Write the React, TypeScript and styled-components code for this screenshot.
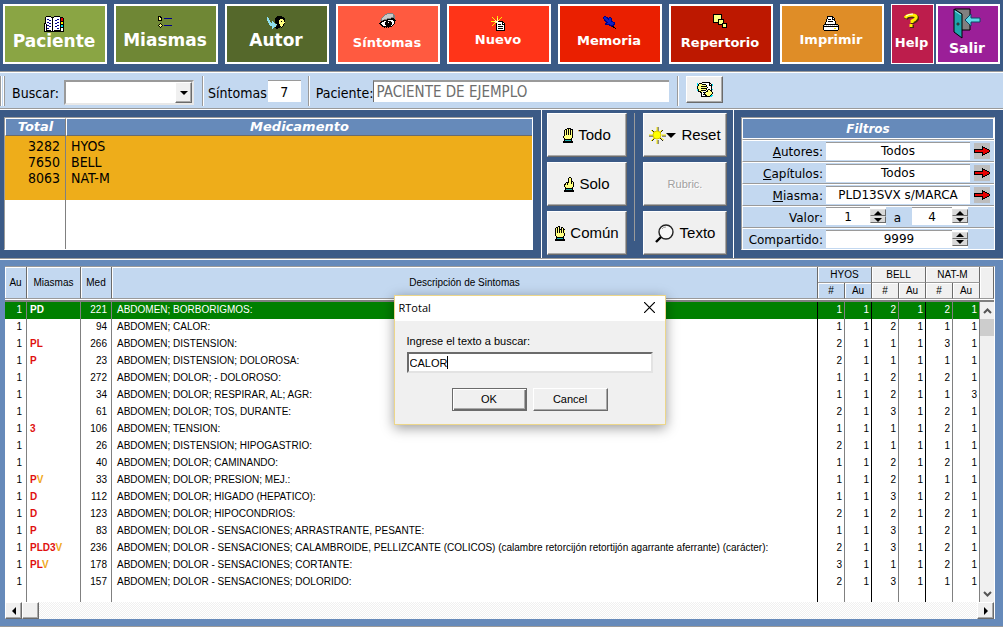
import React from "react";
import styled, { createGlobalStyle, css } from "styled-components";

const color = {
  navy: "#3b5a86",
  steel: "#668aba",
  sky: "#c3d8f0",
  face: "#f0f0f0",
  amber: "#eead1a",
  line: "#9a9a9a",
  dark: "#6b6b6b",
};

const wide = `"DejaVu Sans", Verdana, sans-serif`;
const narrow = `"DejaVu Sans Condensed", "DejaVu Sans", Tahoma, sans-serif`;
const plain = `"Liberation Sans", Arial, sans-serif`;

const GlobalStyle = createGlobalStyle`
  *, *::before, *::after { box-sizing: border-box; }
  body { margin: 0; background: ${color.steel}; color: #000; font-family: ${plain}; }
  button, input, select { font: inherit; color: inherit; margin: 0; padding: 0; border-radius: 0; }
`;

/* ---------- pixel icons ---------- */

const inks: Record<string, string> = {
  k: "#000",
  w: "#fff",
  y: "#ffff80",
  Y: "#ffee00",
  r: "#e60000",
  c: "#8fe0ee",
  C: "#00e0f0",
  n: "#00008b",
  b: "#1020c0",
  g: "#808080",
  s: "#c8c8c8",
  t: "#008080",
  T: "#20b0b0",
};

const Svg = styled.svg`
  display: block;
  flex: none;
`;

function Pixels({ map }: { map: string[] }) {
  const w = Math.max(...map.map((r) => r.length));
  const h = map.length;
  return (
    <Svg width={w} height={h} viewBox={`0 0 ${w} ${h}`} shapeRendering="crispEdges" aria-hidden="true">
      {map.flatMap((row, y) =>
        [...row].map((ch, x) =>
          inks[ch] ? <rect key={`${x}-${y}`} x={x} y={y} width="1" height="1" fill={inks[ch]} /> : null
        )
      )}
    </Svg>
  );
}

const book = [
  "..kkkkk...kkkkkk....",
  ".kwwwwwkkkwwwwwwkkk.",
  ".kwwwwwwkwwwwwwwkrrk",
  ".kwnnwwwkwwwwnnwkrrk",
  ".kwwwnnwkwwnnwwwkrrk",
  ".kwwwwwwkwwwwwwwkkkk",
  ".kwnnwwwkwwwwnnwkYYk",
  "kkwwwnnwkwwnnwwwkYYk",
  "kwkwwwwwkwwwwwwwkkkk",
  "kwknnwwwkwwwwnnwkCCk",
  "kwkwwnnwkwwnnwwwkCCk",
  "kwkwwwwwkwwwwwwwkkkk",
  "kwknnwwwkwwwwnnwkwwk",
  "kwkwwwwwkwwwwwwwkwwk",
  "kwkkkkkwkwkkkkkkkwwk",
  "kkkkkkkkkkkkkkkkkkkk",
];

const list = [
  "kkk...........",
  "kykk..........",
  "kyyk..nnnnnnnn",
  "kyyk..........",
  "kkkk..........",
  "..............",
  "..............",
  "..k...........",
  ".kyk..........",
  "kyyyk.nnnnnnnn",
  ".kyk..........",
  "..k...........",
];

const author = [
  "..........kkkkk...",
  "c........kkkkkkkk.",
  "cc......kkkkkkkkkk",
  "cc......kkkkkyyykk",
  "ccc.....kkkkyyyyyk",
  ".cc..c..kkkkyykyyk",
  ".ccc.cc.kkkkyyyyyy",
  "..cccccc.kkkyyyyyk",
  "..cccccccckkkyyyk.",
  "...cccccc.kkkyyyk.",
  ".....cccckkkkkyk..",
  ".....cc.kkkkk.k...",
  ".....c...kk.......",
];

const eye = [
  "........gggggg...",
  "......ggssssssg..",
  ".....gssssssssgg.",
  "....gsssssssssgg.",
  "...gssssssssgggg.",
  "..gsssssggggkkkg.",
  "..gssgggkkkkkkkk.",
  ".gggkkkkkwwwwwkkk",
  "..kkkwwkkkkkwwwk.",
  ".kkwwwkkkwkkkwwk.",
  "kkwwwwkkkkkkkwwk.",
  ".kkwwwkkkkkkkwk..",
  "..kkwwwkkkkkwk...",
  "...kkkkkkkkkk....",
  ".....k.k.k.......",
];

const fresh = [
  "......Y.......",
  ".Y....Y...Y...",
  "..Y...y..Y....",
  "...Y..y.Y.....",
  "....y.yy......",
  "YYYyywwkkkkk..",
  "....yywwwwwkk.",
  "...Y.kwwwwwkwk",
  "..Y..kwkkkwkkk",
  ".Y...kwwwwwwwk",
  ".....kwkkkkkwk",
  ".....kwwwwwwwk",
  ".....kwkkkkkwk",
  ".....kwwwwwwwk",
  ".....kkkkkkkkk",
];

const pin = [
  ".nn..........",
  "nbbnn.nn.....",
  "nbbbnnbbn....",
  ".nbbbnbbn....",
  ".nnbbbbbn....",
  "..nnbbbbnn...",
  "...nnbbbbbnn.",
  "..nnbbbbbbbn.",
  "..nnnnnbbbnn.",
  "......nnnnn..",
  "........nkk..",
  "..........kk.",
  "............k",
];

const squares = [
  "kkkkkkkkk.....",
  "kyyyyyyyk.....",
  "kyyyyyyyk.....",
  "kyyyyyyyk.....",
  "kyyyyyyyk.....",
  "kyyyykkkkkk...",
  "kyyyykyyyyk...",
  "kyyyykyyyyk...",
  "kkkkkkyyyyk...",
  ".....kyyykkkkk",
  ".....kkkkkyyyk",
  ".........kyyyk",
  ".........kyyyk",
  ".........kkkkk",
];

const printer = [
  "....kkkkkk......",
  "....kwwwwkk.....",
  "....kwwwwkwk....",
  "...kwkkkwkkk....",
  "...kwwwwwwwk....",
  "...kwkkkkkwwk...",
  "..kwwwwwwwwwk...",
  "..kwwwwwwwwwk...",
  ".kkkkkkkkkkkkkk.",
  "kswswswswswswssk",
  "kkkkkkkkkkkkkkkk",
  "kwwwwwwwwwwwwwwk",
  "kwwwwwwwwwwYYwwk",
  "kwwwwwwwwwwwwwwk",
  ".kkkkkkkkkkkkkk.",
];

const handOpen = [
  "....kkkk..",
  "..kkykykkk",
  ".kykykykyk",
  ".kykykykyk",
  ".kykykykyk",
  ".kykykykyk",
  ".kykykykyk",
  ".kyyyyyyyk",
  "kyyyyyyyyk",
  "kyyyyyyyyk",
  ".kyyyyyyk.",
  ".kkkkkkkk.",
  ".kTTTTTTk.",
  "kkkkkkkkkk",
  "kkkkkkkkkk",
];

const handOne = [
  ".....kk...",
  "....kyyk..",
  "....kyyk..",
  "....kyyk..",
  "....kyykk.",
  "..kkkyykyk",
  ".kykyyykyk",
  "kkykyyyyyk",
  "kyyyyyyyyk",
  "kyyyyyyyyk",
  ".kyyyyyyk.",
  ".kkkkkkkk.",
  ".kTTTTTTk.",
  "kkkkkkkkkk",
  "kkkkkkkkkk",
];

const handSome = [
  "...kk.....",
  ".kkyk.kk..",
  "kykyk.kyk.",
  "kykykkkykk",
  "kykykykyky",
  "kykykykyky",
  "kykykykyky",
  "kyyyyyyyyk",
  "kyyyyyyyyk",
  "kyyyyyyyyk",
  ".kyyyyyyk.",
  ".kkkkkkkk.",
  ".kTTTTTTk.",
  "kkkkkkkkkk",
  "kkkkkkkkkk",
];

const handSheet = [
  ".....kkkkkkkk...",
  "C.kkkwwwwwwwkk..",
  "CkyyykkkkwwwkwkC",
  "CkyyyyyyykwwkkkC",
  "kyyykkkkkkwwwwk.",
  "kyyyyyyyyykwwwk.",
  "kyyykkkkkkwwwwk.",
  "CkyyyyyyykwkkwkC",
  "Ckyykkkkkwkyykk.",
  ".kkkyywwwkkyyyk.",
  "...kkwkkkyyyyyyk",
  "....kwwkyyyyyyyk",
  "....kwkkkyyyyyk.",
  "....kwwwkkyyykCC",
  "....kkkkkkkkkCC.",
];

const redArrow = [
  "........k.......",
  "........kkk.....",
  "........krrkk...",
  "kkkkkkkkkrrrrkk.",
  "krrrrrrrrrrrrrrk",
  "krrrrrrrrrrrrrrk",
  "kkkkkkkkkrrrrkk.",
  "........krrkk...",
  "........kkk.....",
  "........k.......",
];

function HelpIcon() {
  return (
    <Svg width="15" height="15" viewBox="0 0 15 15" aria-hidden="true">
      <path d="M2 6 Q3 3 8 3 Q14 3 13 6 Q12 8 9 9 V11 M8 12 V15" fill="none" stroke="#4a2a10" strokeWidth="4" />
      <path d="M1 5 Q3 2 8 2 Q13 2 12 5 Q11 7 8 8 V10 M7 11 V14" fill="none" stroke="#ffee00" strokeWidth="3" />
      <path d="M2 3 Q5 1 9 1" fill="none" stroke="#fff" strokeWidth="1" />
    </Svg>
  );
}

function DoorIcon() {
  return (
    <Svg width="28" height="31" viewBox="0 0 28 31" aria-hidden="true">
      <path d="M2 1 H17 V22 H2 Z" fill="#808080" stroke="#000" />
      <path d="M1 1 L9 6 V30 L1 24 Z" fill="#1fa3ac" stroke="#000" />
      <path d="M2 3 L8 7" stroke="#8fe0ee" />
      <path d="M12 12 L18 6 V10 H27 V14 H18 V18 Z" fill="#5fd8e6" stroke="#0b4a66" />
      <circle cx="5" cy="16" r="1" fill="#fff" stroke="#000" />
    </Svg>
  );
}

function SunIcon() {
  return (
    <Svg width="17" height="17" viewBox="0 0 17 17" aria-hidden="true">
      <path
        d="M9 0 V4 M9 13 V17 M0 9 H4 M13 9 H17 M3 3 L6 6 M14 3 L11 6 M3 14 L6 11 M14 14 L11 11"
        stroke="#222"
        strokeWidth="1"
      />
      <path
        d="M8 0 V4 M8 13 V17 M0 8 H4 M13 8 H17 M2 3 L5 6 M13 3 L11 5 M2 14 L5 11 M15 13 L12 11"
        stroke="#ffee00"
        strokeWidth="1"
      />
      <circle cx="8" cy="8" r="4" fill="#ffff00" stroke="#d8c800" strokeWidth="1" />
    </Svg>
  );
}

function LensIcon() {
  return (
    <Svg width="20" height="19" viewBox="0 0 20 19" aria-hidden="true">
      <circle cx="11" cy="8" r="7" fill="#f8f8f8" stroke="#222" strokeWidth="1.4" />
      <path d="M6 13 L1 18" stroke="#000" strokeWidth="2.4" />
      <path d="M7 5 Q8 3 11 3" stroke="#999" fill="none" />
    </Svg>
  );
}

function Triangle({ dir, size = 4 }: { dir: "up" | "down" | "left" | "right"; size?: number }) {
  const s = size;
  const shapes = {
    down: `0,0 ${2 * s},0 ${s},${s}`,
    up: `0,${s} ${2 * s},${s} ${s},0`,
    left: `${s},0 ${s},${2 * s} 0,${s}`,
    right: `0,0 0,${2 * s} ${s},${s}`,
  };
  const flat = dir === "up" || dir === "down";
  return (
    <Svg width={flat ? 2 * s : s} height={flat ? s : 2 * s} aria-hidden="true">
      <polygon points={shapes[dir]} fill="#000" />
    </Svg>
  );
}

function Chevron({ up }: { up?: boolean }) {
  return (
    <Svg width="9" height="6" viewBox="0 0 9 6" aria-hidden="true">
      <path d={up ? "M1 5 L4.5 1.5 L8 5" : "M1 1 L4.5 4.5 L8 1"} fill="none" stroke="#555" strokeWidth="2" />
    </Svg>
  );
}

/* ---------- shared pieces ---------- */

const raised = css`
  background: ${color.face};
  border: 1px solid;
  border-color: #fff ${color.dark} ${color.dark} #fff;
  box-shadow: inset -1px -1px 0 #a9a9a9;
`;

const groove = css`
  border-top: 1px solid ${color.line};
  box-shadow: inset 0 1px 0 #fff;
`;

const Page = styled.div`
  position: relative;
  min-height: 100vh;
  display: flex;
  flex-direction: column;
`;

/* ---------- main toolbar ---------- */

const Toolbar = styled.nav`
  display: grid;
  grid-template-columns: repeat(8, 104fr) 109fr;
  gap: 7px;
  padding: 4px 3px 7px;
  background: ${color.navy};
`;

const Pair = styled.div`
  display: grid;
  grid-template-columns: 43fr 64fr;
  gap: 2px;
`;

const Tile = styled.button<{ $bg: string; $size: number; $gap: number; $thin?: boolean }>`
  display: flex;
  flex-direction: column;
  align-items: center;
  justify-content: center;
  gap: ${(p) => p.$gap}px;
  height: 60px;
  padding: 0 2px 3px 0;
  border: ${(p) => (p.$thin ? 1 : 2)}px solid #fff;
  background: ${(p) => p.$bg};
  color: #fff;
  font: bold ${(p) => p.$size}px/18px ${wide};
`;

const tiles = [
  { label: "Paciente", bg: "#8aa544", size: 17, gap: 0, map: book },
  { label: "Miasmas", bg: "#6f8735", size: 17, gap: 3, map: list },
  { label: "Autor", bg: "#55682b", size: 17, gap: 2, map: author },
  { label: "Síntomas", bg: "#ff5a40", size: 13, gap: 6, map: eye },
  { label: "Nuevo", bg: "#ff3418", size: 13, gap: 0, map: fresh },
  { label: "Memoria", bg: "#ea1f00", size: 13, gap: 3, map: pin },
  { label: "Repertorio", bg: "#bd1800", size: 13, gap: 6, map: squares },
  { label: "Imprimir", bg: "#df8d27", size: 13, gap: 0, map: printer },
];

/* ---------- search bar ---------- */

const SearchBar = styled.form`
  ${groove}
  display: flex;
  align-items: stretch;
  height: 37px;
  padding: 4px 0 2px;
  background: ${color.sky};
  font: 14px/18px ${narrow};
`;

const Grip = styled.i`
  width: 5px;
  border: 1px solid ${color.line};
  border-width: 0 1px;
  box-shadow: inset -1px 0 0 #fff, inset 1px 0 0 #fff;
`;

const Band = styled.div<{ $pad: string }>`
  display: flex;
  align-items: flex-start;
  padding: ${(p) => p.$pad};

  & + & {
    border-left: 1px solid ${color.line};
    box-shadow: inset 1px 0 0 #fff;
  }

  label {
    padding-top: 4px;
  }
`;

const Combo = styled.div`
  position: relative;
  margin-left: 5px;
  width: 130px;
  height: 25px;
  border: 2px solid;
  border-color: ${color.line} #e8e8e8 #e8e8e8 ${color.line};

  select {
    width: 100%;
    height: 100%;
    appearance: none;
    border: 0;
    background: #fff;
  }

  span {
    ${raised}
    position: absolute;
    inset: 0 0 0 auto;
    width: 17px;
    display: grid;
    place-items: center;
    pointer-events: none;
  }
`;

const CountInput = styled.input`
  width: 33px;
  height: 22px;
  margin-left: 1px;
  border: 0;
  border-top: 1px solid ${color.line};
  background: #fff;
  text-align: center;
`;

const PatientInput = styled.input`
  width: 296px;
  height: 22px;
  border: 0;
  border-top: 2px solid ${color.line};
  border-left: 1px solid ${color.dark};
  padding-left: 2px;
  background: #fff;
  color: #6d6d6d;
  font-size: 15px;
`;

const SheetButton = styled.button`
  ${raised}
  display: grid;
  place-items: center;
  width: 37px;
  height: 27px;
`;

/* ---------- middle panel ---------- */

const Middle = styled.section`
  ${groove}
  display: flex;
  height: 150px;
  padding-top: 1px;
  background: ${color.navy};
`;

const MedPane = styled.div`
  flex: 1;
  min-width: 0;
  padding: 7px 8px 8px 4px;
`;

const MedBox = styled.div`
  height: 133px;
  border: 1px solid;
  border-color: ${color.line} #fff #fff ${color.line};
  background: linear-gradient(${color.amber} 82px, #fff 82px);
`;

const MedTable = styled.table`
  width: 100%;
  height: 100%;
  border-collapse: separate;
  border-spacing: 0;
  table-layout: fixed;
  font: 14px/16px ${narrow};

  th {
    height: 18px;
    padding: 0;
    background: ${color.steel};
    border-top: 1px solid #fff;
    border-left: 1px solid #fff;
    border-bottom: 1px solid ${color.dark};
    color: #fff;
    font: italic bold 13px/16px ${wide};
  }

  td {
    height: 16px;
    padding: 0 5px;
  }

  td:first-child,
  th:first-child {
    width: 61px;
    border-right: 1px solid #808080;
    text-align: right;
  }

  th:first-child {
    text-align: center;
  }

  tbody tr:first-child td {
    height: 18px;
    padding-top: 2px;
  }

  tbody tr:last-child td {
    height: auto;
  }
`;

const Actions = styled.div`
  display: flex;
  width: 193px;
  padding: 3px 4px 0 5px;
  border: 1px solid #fff;
  border-width: 0 1px;
`;

const ActionColumn = styled.div<{ $w: number }>`
  display: flex;
  flex-direction: column;
  gap: 5px;
  width: ${(p) => p.$w}px;
`;

const Divider = styled.i`
  width: 1px;
  height: 128px;
  margin: 0 8px 0 7px;
  background: ${color.line};
`;

const Action = styled.button`
  ${raised}
  display: flex;
  align-items: center;
  justify-content: center;
  gap: 5px;
  height: 44px;
  font: 15px/18px ${plain};

  &:disabled {
    color: #a0a0a0;
    font-size: 11px;
    text-shadow: 1px 1px 0 #fff;
  }
`;

const Sunburst = styled.span`
  display: flex;
  align-items: center;
`;

const FilterPane = styled.form`
  width: 269px;
  padding: 7px 8px 8px 7px;
`;

const FilterBox = styled.fieldset`
  margin: 0;
  padding: 0;
  min-width: 0;
  border: 1px solid;
  border-color: ${color.line} #fff #fff ${color.line};
  background: ${color.sky};
  font: 12px/16px ${wide};
`;

const FilterTitle = styled.div`
  height: 21px;
  border: 1px solid #fff;
  background: ${color.steel};
  color: #fff;
  text-align: center;
  font-style: italic;
  font-weight: bold;
  line-height: 20px;
`;

const FilterRow = styled.div`
  display: grid;
  grid-template-columns: 83px 1fr 24px;
  align-items: center;
  height: 22px;
  border-top: 1px solid ${color.line};
  border-left: 1px solid #fff;
  box-shadow: inset 0 1px 0 #fff;

  label {
    padding: 3px 3px 0 0;
    text-align: right;
  }
`;

const FilterInput = styled.input<{ $lead?: number }>`
  width: 100%;
  min-width: 0;
  height: 18px;
  padding-left: ${(p) => p.$lead ?? 0}px;
  border: 0;
  border-top: 1px solid ${color.line};
  background: #fff;
  text-align: center;
`;

const ArrowButton = styled.button`
  justify-self: center;
  display: grid;
  place-items: center;
  width: 16px;
  height: 16px;
  border: 0;
  background: #bdbdbd;
`;

const SpinField = styled.div<{ $w?: number }>`
  display: flex;
  align-items: center;
  width: ${(p) => (p.$w ? `${p.$w}px` : "auto")};
  height: 18px;
  margin-right: ${(p) => (p.$w ? 0 : 2)}px;
  background: #fff;
`;

const Spinner = styled.span`
  display: flex;
  flex: none;
  flex-direction: column;
  width: 16px;

  button {
    display: grid;
    place-items: center;
    height: 7px;
    border: 1px solid;
    border-color: #e0e0e0 ${color.dark} ${color.dark} #e0e0e0;
    background: #d8d8d8;
  }
`;

const Range = styled.div`
  display: flex;
  justify-content: space-between;
  margin-right: 2px;
`;

function Spin({ name }: { name: string }) {
  return (
    <Spinner>
      <button type="button" aria-label={`${name} +`}>
        <Triangle dir="up" size={4} />
      </button>
      <button type="button" aria-label={`${name} -`}>
        <Triangle dir="down" size={4} />
      </button>
    </Spinner>
  );
}

/* ---------- symptom grid ---------- */

const GridPane = styled.main`
  ${groove}
  flex: 1;
  padding: 7px 8px 7px 5px;
  background: ${color.steel};
  border-bottom: 1px solid ${color.line};
`;

const GridBox = styled.div`
  border: 1px solid;
  border-width: 1px 1px 0 0;
  border-color: ${color.line} #fff;
  background: #fff;
`;

const SymptomTable = styled.table`
  width: 100%;
  border-collapse: separate;
  border-spacing: 0;
  table-layout: fixed;
  font: 10px/15px ${plain};

  th {
    height: 16px;
    padding: 0;
    overflow: hidden;
    border-right: 1px solid ${color.dark};
    border-bottom: 1px solid ${color.line};
    box-shadow: inset 1px 1px 0 #fff;
    background: ${color.sky};
    font-weight: normal;
    white-space: nowrap;
  }

  th.off {
    background: ${color.face};
  }

  thead tr:last-child th {
    height: 15px;
  }
`;

const Rule = styled.td`
  height: 3px;
  padding: 0;
  border-top: 1px solid #fff;
  border-bottom: 2px solid #808080;
`;

const Cell = styled.td<{ $align?: "right"; $strong?: boolean; $pad?: number }>`
  height: 17px;
  padding: 0 ${(p) => p.$pad ?? 3}px 2px;
  border-right: 1px solid ${(p) => (p.$strong ? "#000" : "#808080")};
  text-align: ${(p) => p.$align ?? "left"};
  white-space: nowrap;
  overflow: hidden;
`;

const Row = styled.tr<{ $selected?: boolean }>`
  ${(p) =>
    p.$selected &&
    css`
      ${Cell} {
        background: #008000;
        color: #fff;
      }
    `}
`;

const Mark = styled.b<{ $tone: "red" | "gold" | "white" }>`
  color: ${(p) => ({ red: "#e01010", gold: "#f0a820", white: "#fff" })[p.$tone]};
`;

const ScrollCell = styled.td`
  padding: 0;
  height: 300px;
  vertical-align: top;
  background: ${color.face};
`;

const VScroll = styled.div`
  display: flex;
  flex-direction: column;
  height: 300px;

  button {
    display: grid;
    place-items: center;
    height: 17px;
    border: 0;
    background: ${color.face};
  }

  i {
    height: 17px;
    background: #cdcdcd;
  }

  button:last-child {
    margin-top: auto;
  }
`;

const HScroll = styled.div`
  display: flex;
  height: 17px;
  background: repeating-conic-gradient(#ffffff 0 25%, #f0f0f0 0 50%) 0 0 / 2px 2px;

  button,
  i {
    ${raised}
    display: grid;
    place-items: center;
    width: 17px;
  }

  button:last-child {
    margin-left: auto;
  }
`;

type Sym = [string, number, string, number[]];

const symptoms: Sym[] = [
  ["PD", 221, "ABDOMEN; BORBORIGMOS:", [1, 1, 2, 1, 2, 1]],
  ["", 94, "ABDOMEN; CALOR:", [1, 1, 2, 1, 1, 1]],
  ["PL", 266, "ABDOMEN; DISTENSION:", [2, 1, 1, 1, 3, 1]],
  ["P", 23, "ABDOMEN; DISTENSION; DOLOROSA:", [2, 1, 1, 1, 1, 1]],
  ["", 272, "ABDOMEN; DOLOR; - DOLOROSO:", [1, 1, 2, 1, 2, 1]],
  ["", 34, "ABDOMEN; DOLOR; RESPIRAR, AL; AGR:", [1, 1, 2, 1, 1, 3]],
  ["", 61, "ABDOMEN; DOLOR; TOS, DURANTE:", [2, 1, 3, 1, 2, 1]],
  ["3", 106, "ABDOMEN; TENSION:", [1, 1, 1, 1, 2, 1]],
  ["", 26, "ABDOMEN; DISTENSION; HIPOGASTRIO:", [2, 1, 1, 1, 1, 1]],
  ["", 40, "ABDOMEN; DOLOR; CAMINANDO:", [1, 1, 2, 1, 2, 1]],
  ["PV", 33, "ABDOMEN; DOLOR; PRESION; MEJ.:", [1, 1, 2, 1, 1, 1]],
  ["D", 112, "ABDOMEN; DOLOR; HIGADO (HEPATICO):", [1, 1, 3, 1, 2, 1]],
  ["D", 123, "ABDOMEN; DOLOR; HIPOCONDRIOS:", [2, 1, 2, 1, 2, 1]],
  ["P", 83, "ABDOMEN; DOLOR - SENSACIONES; ARRASTRANTE, PESANTE:", [1, 1, 3, 1, 2, 1]],
  [
    "PLD3V",
    236,
    "ABDOMEN; DOLOR - SENSACIONES; CALAMBROIDE, PELLIZCANTE (COLICOS) (calambre retorcijón retortijón agarrante aferrante) (carácter):",
    [2, 1, 3, 1, 2, 1],
  ],
  ["PLV", 178, "ABDOMEN; DOLOR - SENSACIONES; CORTANTE:", [3, 1, 1, 1, 2, 1]],
  ["", 157, "ABDOMEN; DOLOR - SENSACIONES; DOLORIDO:", [2, 1, 3, 1, 1, 1]],
];

function SymptomRow({ sym, first }: { sym: Sym; first: boolean }) {
  const [marks, med, text, nums] = sym;
  return (
    <Row $selected={first}>
      <Cell $align="right" $pad={4}>1</Cell>
      <Cell>
        {[...marks].map((m, i) => (
          <Mark key={i} $tone={first ? "white" : m === "V" ? "gold" : "red"}>{m}</Mark>
        ))}
      </Cell>
      <Cell $align="right" $pad={4}>{med}</Cell>
      <Cell $strong $pad={5}>{text}</Cell>
      {nums.map((n, i) => (
        <Cell key={i} $align="right" $strong={i === 1 || i === 3} $pad={2}>{n}</Cell>
      ))}
      {first && (
        <ScrollCell rowSpan={symptoms.length + 1}>
          <VScroll>
            <button type="button" aria-label="Subir"><Chevron up /></button>
            <i />
            <button type="button" aria-label="Bajar"><Chevron /></button>
          </VScroll>
        </ScrollCell>
      )}
    </Row>
  );
}

const FillCell = styled(Cell)`
  height: 11px;
  padding: 0;
`;

/* ---------- prompt ---------- */

const Dialog = styled.form`
  position: absolute;
  top: 295px;
  left: calc(50% - 108px);
  width: 272px;
  height: 130px;
  border: 1px solid #ecd68a;
  background: ${color.face};
  box-shadow: 0 3px 12px rgba(0, 0, 0, 0.4);
  font: 11px/14px ${plain};
`;

const DialogTitle = styled.header`
  display: flex;
  align-items: center;
  justify-content: space-between;
  height: 25px;
  padding: 0 8px 2px 4px;
  background: #fff;
  font: 11px/16px "Open Sans", "Noto Sans", sans-serif;

  button {
    display: grid;
    place-items: center;
    width: 15px;
    height: 15px;
    border: 0;
    background: none;
  }
`;

const DialogBody = styled.div`
  padding: 13px 12px 0;

  label {
    display: block;
  }
`;

const TextField = styled.div`
  display: flex;
  align-items: center;
  height: 21px;
  margin: 4px 0 15px;
  padding: 0 1px;
  border: 2px solid;
  border-color: ${color.dark} #e3e3e3 #e3e3e3 ${color.dark};
  background: #fff;

  input {
    field-sizing: content;
    border: 0;
    outline: 0;
    background: none;
  }

  i {
    width: 1px;
    height: 13px;
    background: #000;
  }
`;

const DialogButtons = styled.div`
  display: flex;
  justify-content: center;
  gap: 6px;
`;

const DialogButton = styled.button<{ $main?: boolean }>`
  ${raised}
  width: 75px;
  height: 23px;
  padding-bottom: 2px;
  ${(p) =>
    p.$main &&
    css`
      border-color: ${color.dark};
      box-shadow: inset 1px 1px 0 #fff, inset -1px -1px 0 ${color.dark}, inset -2px -2px 0 #a9a9a9;
    `}
`;

export default function App() {
  return (
    <Page>
      <GlobalStyle />
      <Toolbar>
        {tiles.map((t) => (
          <Tile key={t.label} type="button" $bg={t.bg} $size={t.size} $gap={t.gap}>
            <Pixels map={t.map} />
            {t.label}
          </Tile>
        ))}
        <Pair>
          <Tile type="button" $bg="#bd1d4c" $size={13} $gap={6} $thin>
            <HelpIcon />
            Help
          </Tile>
          <Tile type="button" $bg="#9b1f98" $size={14} $gap={0}>
            <DoorIcon />
            Salir
          </Tile>
        </Pair>
      </Toolbar>

      <SearchBar>
        <Grip />
        <Band $pad="4px 8px 0 7px">
          <label htmlFor="buscar">Buscar:</label>
          <Combo>
            <select id="buscar" defaultValue="">
              <option value=""></option>
            </select>
            <span><Triangle dir="down" /></span>
          </Combo>
        </Band>
        <Band $pad="4px 7px 0 5px">
          <label htmlFor="sintomas">Síntomas</label>
          <CountInput id="sintomas" defaultValue="7" />
        </Band>
        <Band $pad="4px 8px 0 7px">
          <label htmlFor="paciente">Paciente:</label>
          <PatientInput id="paciente" defaultValue="PACIENTE DE EJEMPLO" />
        </Band>
        <Band $pad="0 0 0 8px">
          <SheetButton type="button" aria-label="Ficha">
            <Pixels map={handSheet} />
          </SheetButton>
        </Band>
      </SearchBar>

      <Middle>
        <MedPane>
          <MedBox>
            <MedTable>
              <thead>
                <tr>
                  <th scope="col">Total</th>
                  <th scope="col">Medicamento</th>
                </tr>
              </thead>
              <tbody>
                <tr><td>3282</td><td>HYOS</td></tr>
                <tr><td>7650</td><td>BELL</td></tr>
                <tr><td>8063</td><td>NAT-M</td></tr>
                <tr><td /><td /></tr>
              </tbody>
            </MedTable>
          </MedBox>
        </MedPane>

        <Actions>
          <ActionColumn $w={80}>
            <Action type="button"><Pixels map={handOpen} />Todo</Action>
            <Action type="button"><Pixels map={handOne} />Solo</Action>
            <Action type="button"><Pixels map={handSome} />Común</Action>
          </ActionColumn>
          <Divider />
          <ActionColumn $w={84}>
            <Action type="button">
              <Sunburst><SunIcon /><Triangle dir="down" size={5} /></Sunburst>
              Reset
            </Action>
            <Action type="button" disabled>Rubric.</Action>
            <Action type="button"><LensIcon />Texto</Action>
          </ActionColumn>
        </Actions>

        <FilterPane>
          <FilterBox>
            <FilterTitle>Filtros</FilterTitle>
            <FilterRow>
              <label htmlFor="autores"><u>A</u>utores:</label>
              <FilterInput id="autores" defaultValue="Todos" />
              <ArrowButton type="button" aria-label="Elegir autores"><Pixels map={redArrow} /></ArrowButton>
            </FilterRow>
            <FilterRow>
              <label htmlFor="capitulos"><u>C</u>apítulos:</label>
              <FilterInput id="capitulos" defaultValue="Todos" />
              <ArrowButton type="button" aria-label="Elegir capítulos"><Pixels map={redArrow} /></ArrowButton>
            </FilterRow>
            <FilterRow>
              <label htmlFor="miasma"><u>M</u>iasma:</label>
              <FilterInput id="miasma" defaultValue="PLD13SVX s/MARCA" />
              <ArrowButton type="button" aria-label="Elegir miasma"><Pixels map={redArrow} /></ArrowButton>
            </FilterRow>
            <FilterRow>
              <label htmlFor="desde">Valor:</label>
              <Range>
                <SpinField $w={60}>
                  <FilterInput id="desde" defaultValue="1" />
                  <Spin name="Desde" />
                </SpinField>
                <label htmlFor="hasta">a</label>
                <SpinField $w={56}>
                  <FilterInput id="hasta" defaultValue="4" />
                  <Spin name="Hasta" />
                </SpinField>
              </Range>
            </FilterRow>
            <FilterRow>
              <label htmlFor="compartido">Compartido:</label>
              <SpinField>
                <FilterInput id="compartido" defaultValue="9999" $lead={20} />
                <Spin name="Compartido" />
              </SpinField>
            </FilterRow>
          </FilterBox>
        </FilterPane>
      </Middle>

      <GridPane>
        <GridBox>
          <SymptomTable>
            <colgroup>
              <col width="22" />
              <col width="54" />
              <col width="31" />
              <col />
              <col width="27" />
              <col width="27" />
              <col width="27" />
              <col width="27" />
              <col width="27" />
              <col width="27" />
              <col width="14" />
            </colgroup>
            <thead>
              <tr>
                <th scope="col" rowSpan={2}>Au</th>
                <th scope="col" rowSpan={2}>Miasmas</th>
                <th scope="col" rowSpan={2}>Med</th>
                <th scope="col" rowSpan={2}>Descripción de Sintomas</th>
                <th scope="colgroup" colSpan={2}>HYOS</th>
                <th scope="colgroup" colSpan={2} className="off">BELL</th>
                <th scope="colgroup" colSpan={2} className="off">NAT-M</th>
                <th rowSpan={2} className="off" />
              </tr>
              <tr>
                <th scope="col">#</th>
                <th scope="col">Au</th>
                <th scope="col" className="off">#</th>
                <th scope="col" className="off">Au</th>
                <th scope="col" className="off">#</th>
                <th scope="col" className="off">Au</th>
              </tr>
            </thead>
            <tbody>
              <tr><Rule colSpan={11} /></tr>
              {symptoms.map((s, i) => (
                <SymptomRow key={i} sym={s} first={i === 0} />
              ))}
              <tr>
                <FillCell />
                <FillCell />
                <FillCell />
                <FillCell $strong />
                <FillCell />
                <FillCell $strong />
                <FillCell />
                <FillCell $strong />
                <FillCell />
                <FillCell />
              </tr>
            </tbody>
          </SymptomTable>
          <HScroll>
            <button type="button" aria-label="Izquierda"><Triangle dir="left" /></button>
            <i />
            <button type="button" aria-label="Derecha"><Triangle dir="right" /></button>
          </HScroll>
        </GridBox>
      </GridPane>

      <Dialog role="dialog" aria-label="RTotal">
        <DialogTitle>
          RTotal
          <button type="button" aria-label="Cerrar">
            <Svg width="11" height="11" viewBox="0 0 11 11">
              <path d="M0 0 L11 11 M11 0 L0 11" stroke="#000" strokeWidth="1.2" />
            </Svg>
          </button>
        </DialogTitle>
        <DialogBody>
          <label htmlFor="texto">Ingrese el texto a buscar:</label>
          <TextField>
            <input id="texto" defaultValue="CALOR" />
            <i />
          </TextField>
          <DialogButtons>
            <DialogButton type="submit" $main>OK</DialogButton>
            <DialogButton type="button">Cancel</DialogButton>
          </DialogButtons>
        </DialogBody>
      </Dialog>
    </Page>
  );
}
